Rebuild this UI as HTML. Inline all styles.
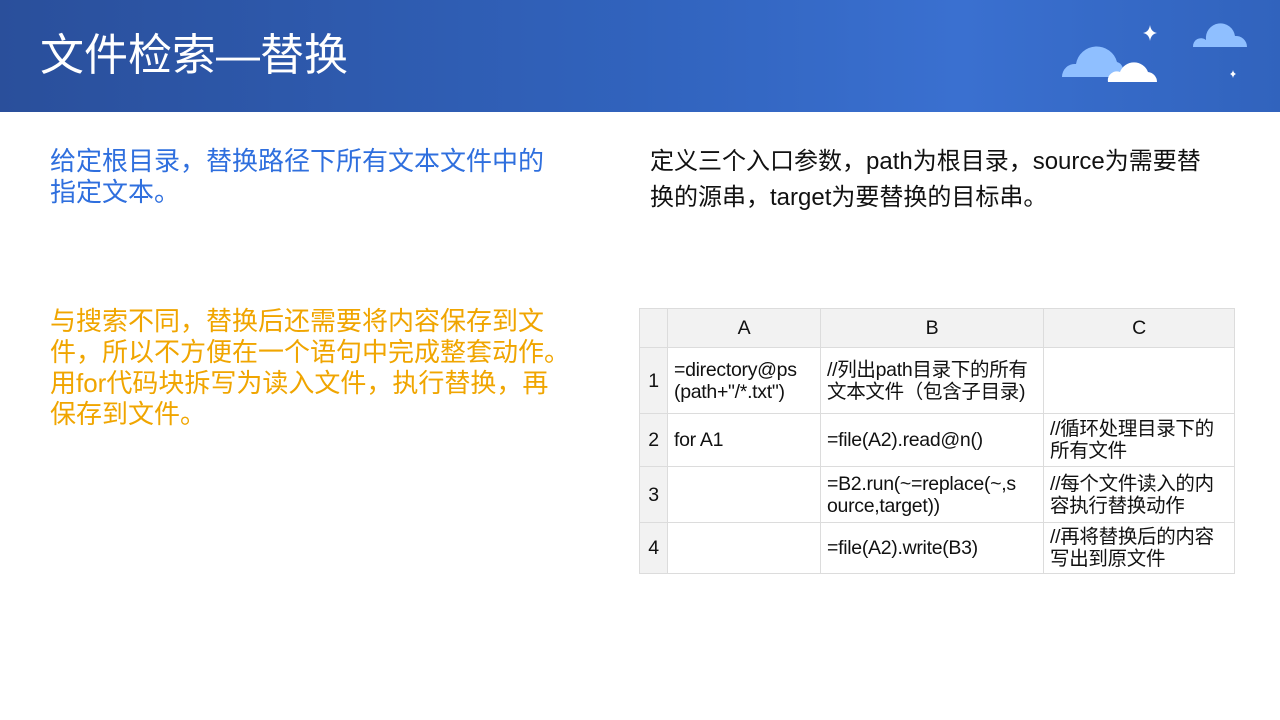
<!DOCTYPE html>
<html><head><meta charset="utf-8"><style>
body{margin:0;width:1280px;height:720px;background:#fff;font-family:"Liberation Sans","Noto Sans CJK SC",sans-serif;position:relative;overflow:hidden}
.hdr{position:absolute;left:0;top:0;width:1280px;height:112px;background:linear-gradient(90deg,#2a4f9b 0%,#3163bd 50%,#3a70d0 75%,#3163bd 100%)}
.title{position:absolute;left:40px;top:29px;color:#fff;font-size:44px;line-height:54px}
.t{position:absolute;font-size:26px;line-height:31px}
table{position:absolute;left:639px;top:308px;border-collapse:collapse;table-layout:fixed;width:595px;font-size:19.5px;line-height:22px;color:#111}
td{border:1px solid #dcdcdc;padding:0 6px;vertical-align:middle;overflow:hidden;white-space:nowrap;letter-spacing:-0.3px}
.h td{background:#f2f2f2;text-align:center}
td.n{background:#f2f2f2;text-align:center;padding:0}
</style></head><body>
<div class="hdr">
<div class="title">文件检索—替换</div>
<svg style="position:absolute;left:0;top:0" width="1280" height="112">
<path d="M1062 77 A13 13 0 0 1 1076 64 A21 21 0 0 1 1117 62 A8 8 0 0 1 1123 70 L1123 77 Z" fill="#8fbfff"/>
<path d="M1108 82 A9 9 0 0 1 1120 72 A15 15 0 0 1 1148 72 A10 10 0 0 1 1157 82 Z" fill="#fff"/>
<path d="M1193 47 A8 8 0 0 1 1206 40 A14 14 0 0 1 1235 36 A11 11 0 0 1 1247 47 Z" fill="#8fbfff"/>
<path d="M1150 25 Q1151 32 1157 33 Q1151 34 1150 41 Q1149 34 1143 33 Q1149 32 1150 25Z" fill="#fff"/>
<path d="M1233 70 Q1233.5 73 1236 74 Q1233.5 75 1233 78 Q1232.5 75 1230 74 Q1232.5 73 1233 70Z" fill="#fff"/>
</svg>
</div>
<div class="t" style="left:50px;top:146px;color:#2f6fde;width:560px">给定根目录，替换路径下所有文本文件中的<br>指定文本。</div>
<div class="t" style="left:650px;top:144px;color:#111;font-size:24px;line-height:36px;width:620px">定义三个入口参数，path为根目录，source为需要替<br>换的源串，target为要替换的目标串。</div>
<div class="t" style="left:50px;top:306px;color:#f0a500;width:600px">与搜索不同，替换后还需要将内容保存到文<br>件，所以不方便在一个语句中完成整套动作。<br>用for代码块拆写为读入文件，执行替换，再<br>保存到文件。</div>
<table>
<colgroup><col style="width:28px"><col style="width:153px"><col style="width:223px"><col style="width:191px"></colgroup>
<tr class="h" style="height:39px"><td></td><td>A</td><td>B</td><td>C</td></tr>
<tr style="height:66px"><td class="n">1</td><td>=directory@ps<br>(path+"/*.txt")</td><td>//列出path目录下的所有<br>文本文件（包含子目录)</td><td></td></tr>
<tr style="height:53px"><td class="n">2</td><td>for A1</td><td>=file(A2).read@n()</td><td>//循环处理目录下的<br>所有文件</td></tr>
<tr style="height:56px"><td class="n">3</td><td></td><td>=B2.run(~=replace(~,s<br>ource,target))</td><td>//每个文件读入的内<br>容执行替换动作</td></tr>
<tr style="height:51px"><td class="n">4</td><td></td><td>=file(A2).write(B3)</td><td>//再将替换后的内容<br>写出到原文件</td></tr>
</table>
</body></html>
